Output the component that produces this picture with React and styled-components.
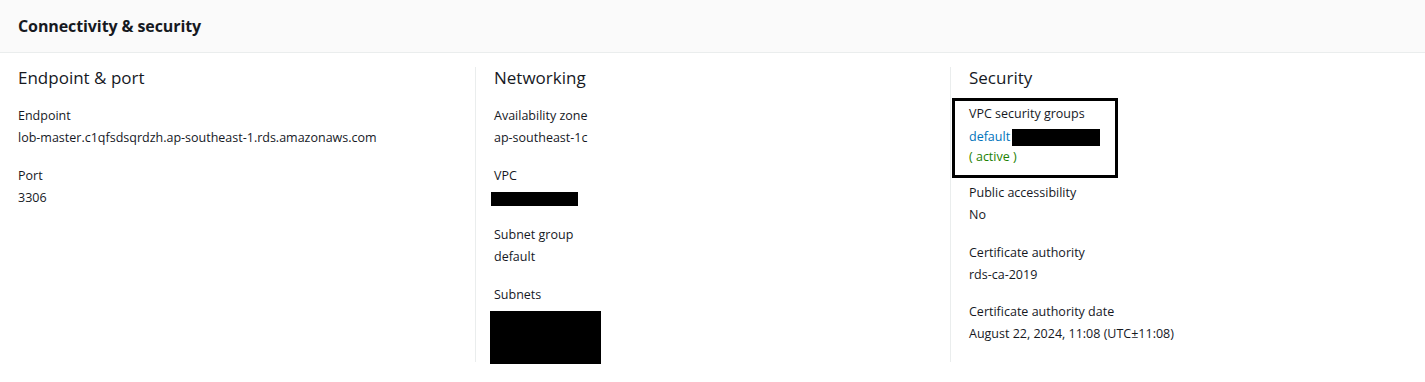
import React from 'react';
import styled, { createGlobalStyle } from 'styled-components';

const GlobalStyle = createGlobalStyle`
  html, body {
    margin: 0;
    padding: 0;
    background: #ffffff;
  }
  body {
    font-family: "Open Sans", "Noto Sans", Arial, sans-serif;
    color: #16191f;
  }
`;

const Panel = styled.section`
  width: 1425px;
  height: 382px;
  background: #ffffff;
  overflow: hidden;
`;

const Header = styled.header`
  height: 53px;
  box-sizing: border-box;
  padding: 0 18px;
  display: flex;
  align-items: center;
  background: #fafafa;
  border-bottom: 1px solid #eaeded;
`;

const Title = styled.h2`
  margin: 0;
  font-size: 16px;
  font-weight: 700;
  letter-spacing: -0.1px;
  color: #16191f;
`;

const Columns = styled.div`
  display: grid;
  grid-template-columns: repeat(3, 1fr);
  align-items: start;
  padding-top: 14px;
`;

const Column = styled.div`
  box-sizing: border-box;
  height: 295px;
  padding-left: 18px;
  border-left: ${({ $first }) => ($first ? 'none' : '1px solid #eaeded')};
`;

const ColumnTitle = styled.h3`
  margin: 0 0 ${({ $tight }) => ($tight ? '9px' : '16px')};
  font-size: 17px;
  font-weight: 400;
  line-height: 22px;
  color: #16191f;
`;

const Field = styled.div`
  display: flex;
  flex-direction: column;
  margin-bottom: 15px;
`;

const Label = styled.div`
  font-size: 12.5px;
  line-height: 22px;
  color: #16191f;
`;

const Value = styled.div`
  font-size: 12.5px;
  line-height: ${({ $lh }) => $lh || 22.5}px;
  min-height: ${({ $lh }) => $lh || 22.5}px;
  color: #16191f;
  display: flex;
  align-items: center;
`;

const Link = styled.a`
  color: #0073bb;
  text-decoration: none;
`;

const Status = styled.div`
  font-size: 12.5px;
  line-height: 16px;
  color: #1d8102;
`;

const Redacted = styled.span`
  display: block;
  background: #000000;
  width: ${({ $w }) => $w}px;
  height: ${({ $h }) => $h}px;
  margin-left: ${({ $ml }) => $ml || 0}px;
  margin-top: ${({ $mt }) => $mt || 0}px;
`;

const Highlight = styled.div`
  width: 166px;
  box-sizing: border-box;
  margin: 0 0 4px -17px;
  padding: 2px 0 10px 14px;
  border: 3px solid #000000;
`;

export default function App() {
  return (
    <>
      <GlobalStyle />
      <Panel>
        <Header>
          <Title>Connectivity &amp; security</Title>
        </Header>
        <Columns>
          <Column $first>
            <ColumnTitle>Endpoint &amp; port</ColumnTitle>
            <Field>
              <Label>Endpoint</Label>
              <Value>lob-master.c1qfsdsqrdzh.ap-southeast-1.rds.amazonaws.com</Value>
            </Field>
            <Field>
              <Label>Port</Label>
              <Value>3306</Value>
            </Field>
          </Column>
          <Column>
            <ColumnTitle>Networking</ColumnTitle>
            <Field>
              <Label>Availability zone</Label>
              <Value>ap-southeast-1c</Value>
            </Field>
            <Field>
              <Label>VPC</Label>
              <Value>
                <Redacted $w={87} $h={14} $ml={-3} $mt={3} />
              </Value>
            </Field>
            <Field>
              <Label>Subnet group</Label>
              <Value>default</Value>
            </Field>
            <Field>
              <Label>Subnets</Label>
              <Redacted $w={111} $h={53} $ml={-4} $mt={5} />
            </Field>
          </Column>
          <Column>
            <ColumnTitle $tight>Security</ColumnTitle>
            <Highlight>
              <Label>VPC security groups</Label>
              <Value $lh={24}>
                <Link href="#">default</Link>
                <Redacted $w={88} $h={17} $ml={2} />
              </Value>
              <Status>( active )</Status>
            </Highlight>
            <Field>
              <Label>Public accessibility</Label>
              <Value>No</Value>
            </Field>
            <Field>
              <Label>Certificate authority</Label>
              <Value>rds-ca-2019</Value>
            </Field>
            <Field>
              <Label>Certificate authority date</Label>
              <Value>August 22, 2024, 11:08 (UTC±11:08)</Value>
            </Field>
          </Column>
        </Columns>
      </Panel>
    </>
  );
}
